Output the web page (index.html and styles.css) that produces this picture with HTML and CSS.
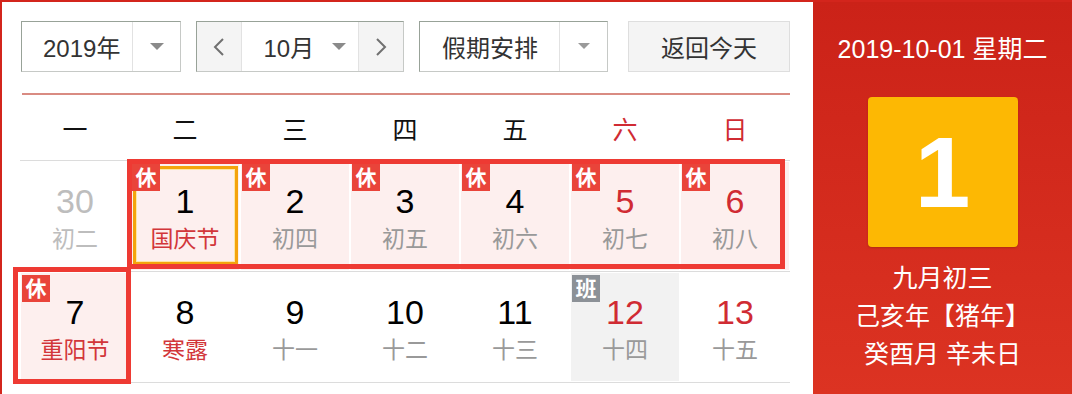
FILE: index.html
```html
<!DOCTYPE html>
<html lang="zh-CN">
<head>
    <meta charset="UTF-8">
    <meta name="viewport" content="width=device-width, initial-scale=1.0">
    <title>万年历</title>
    <link rel="stylesheet" href="styles.css">
</head>
<body>
    <div class="calendar">
        <div class="main">
            <div class="toolbar">
                <div class="select year-select">
                    <span class="select-text">2019年</span>
                    <span class="select-arrow">
                        <svg width="14" height="8" viewBox="0 0 14 8"><polygon points="0,0 14,0 7,7" fill="#8a8a8a"/></svg>
                    </span>
                </div>

                <div class="month-group">
                    <button class="nav-btn">
                        <svg width="14" height="20" viewBox="0 0 14 20"><polyline points="11,2 3,10 11,18" fill="none" stroke="#707070" stroke-width="2"/></svg>
                    </button>
                    <div class="month-select">
                        <span>10月</span>
                        <svg width="14" height="8" viewBox="0 0 14 8"><polygon points="0,0 14,0 7,7" fill="#8a8a8a"/></svg>
                    </div>
                    <button class="nav-btn">
                        <svg width="14" height="20" viewBox="0 0 14 20"><polyline points="3,2 11,10 3,18" fill="none" stroke="#707070" stroke-width="2"/></svg>
                    </button>
                </div>

                <div class="select holiday-select">
                    <span class="select-text">假期安排</span>
                    <span class="select-arrow">
                        <svg width="12" height="7" viewBox="0 0 12 7"><polygon points="0,0 12,0 6,6" fill="#9a9a9a"/></svg>
                    </span>
                </div>

                <button class="today-btn">返回今天</button>
            </div>

            <div class="divider"></div>

            <div class="week-head">
                <div>一</div>
                <div>二</div>
                <div>三</div>
                <div>四</div>
                <div>五</div>
                <div class="weekend">六</div>
                <div class="weekend">日</div>
            </div>

            <div class="week-row">
                <div class="day other">
                    <span class="num">30</span>
                    <span class="lunar">初二</span>
                </div>
                <div class="range range-top">
                    <div class="day holiday selected">
                        <span class="badge">休</span>
                        <span class="num">1</span>
                        <span class="lunar festival">国庆节</span>
                    </div>
                    <div class="day holiday">
                        <span class="badge">休</span>
                        <span class="num">2</span>
                        <span class="lunar">初四</span>
                    </div>
                    <div class="day holiday">
                        <span class="badge">休</span>
                        <span class="num">3</span>
                        <span class="lunar">初五</span>
                    </div>
                    <div class="day holiday">
                        <span class="badge">休</span>
                        <span class="num">4</span>
                        <span class="lunar">初六</span>
                    </div>
                    <div class="day holiday weekend">
                        <span class="badge">休</span>
                        <span class="num">5</span>
                        <span class="lunar">初七</span>
                    </div>
                    <div class="day holiday weekend">
                        <span class="badge">休</span>
                        <span class="num">6</span>
                        <span class="lunar">初八</span>
                    </div>
                </div>
            </div>

            <div class="week-row">
                <div class="range range-bottom">
                    <div class="day holiday">
                        <span class="badge">休</span>
                        <span class="num">7</span>
                        <span class="lunar festival">重阳节</span>
                    </div>
                </div>
                <div class="day">
                    <span class="num">8</span>
                    <span class="lunar festival">寒露</span>
                </div>
                <div class="day">
                    <span class="num">9</span>
                    <span class="lunar">十一</span>
                </div>
                <div class="day">
                    <span class="num">10</span>
                    <span class="lunar">十二</span>
                </div>
                <div class="day">
                    <span class="num">11</span>
                    <span class="lunar">十三</span>
                </div>
                <div class="day workday weekend">
                    <span class="badge work">班</span>
                    <span class="num">12</span>
                    <span class="lunar">十四</span>
                </div>
                <div class="day weekend">
                    <span class="num">13</span>
                    <span class="lunar">十五</span>
                </div>
            </div>
        </div>

        <div class="side">
            <div class="side-date">2019-10-01 星期二</div>
            <div class="side-day">1</div>
            <div class="side-lunar">
                <div>九月初三</div>
                <div>己亥年【猪年】</div>
                <div>癸酉月 辛未日</div>
            </div>
        </div>
    </div>
</body>
</html>
```

FILE: styles.css
```css
* {
    margin: 0;
    padding: 0;
    box-sizing: border-box;
    font-family: 'Liberation Sans', 'Noto Sans CJK SC', sans-serif;
}

:root {
    --red: #d3251c;
    --text-color: #333;
    --line-color: #dcdcdc;
    --holiday-bg: #fdefee;
    --badge-red: #e9443a;
    --weekend-color: #d02b33;
}

body {
    background: #fff;
    overflow: hidden;
}

.calendar {
    display: flex;
    height: 394px;
    overflow: hidden;
    border-top: 2px solid var(--red);
    border-left: 2px solid var(--red);
}

.main {
    width: 811px;
    padding: 19px 23px 0 18px;
    background: #fff;
}

/* toolbar */
.toolbar {
    display: flex;
    height: 51px;
    margin-left: 1px;
    color: var(--text-color);
    font-size: 24px;
}

.select {
    display: flex;
    height: 51px;
    border: 1px solid #c6c9c6;
    border-top-color: #98a298;
    border-left-color: #98a298;
    background: #fff;
}

.select-text {
    flex: 1;
    display: flex;
    align-items: center;
    padding-left: 21px;
}

.select-arrow {
    width: 48px;
    display: flex;
    align-items: center;
    justify-content: center;
    border-left: 1px solid #e2e2e2;
}

.year-select {
    width: 160px;
}

.month-group {
    display: flex;
    width: 208px;
    height: 51px;
    margin-left: 15px;
    border: 1px solid #c6c9c6;
    border-top-color: #98a298;
    border-left-color: #98a298;
}

.nav-btn {
    width: 44px;
    border: none;
    background: #f4f4f4;
    display: flex;
    align-items: center;
    justify-content: center;
}

.month-select {
    width: 120px;
    display: flex;
    align-items: center;
    gap: 18px;
    padding-left: 22px;
    background: #fff;
    border-left: 1px solid #e2e2e2;
    border-right: 1px solid #e2e2e2;
}

.holiday-select {
    width: 189px;
    margin-left: 15px;
}

.holiday-select .select-text {
    padding-left: 22px;
}

.today-btn {
    width: 162px;
    height: 51px;
    margin-left: 20px;
    border: 1px solid #dedede;
    background: #f4f4f4;
    color: var(--text-color);
    font-size: 24px;
}

.divider {
    height: 2px;
    margin: 21px 0 0 2px;
    background: #d98b82;
}

/* week header */
.week-head {
    display: flex;
    height: 66px;
    border-bottom: 1px solid var(--line-color);
    font-size: 25px;
    color: #111;
}

.week-head div {
    width: 110px;
    display: flex;
    align-items: center;
    justify-content: center;
}

.week-head .weekend {
    color: var(--weekend-color);
}

/* day grid */
.week-row {
    display: flex;
    border-bottom: 1px solid var(--line-color);
}

.range {
    display: flex;
    position: relative;
}

.range::after {
    content: '';
    position: absolute;
    border: 5px solid #ee3a33;
    pointer-events: none;
    z-index: 1;
}

.range-top::after {
    top: -2px;
    right: 5px;
    bottom: 2px;
    left: -3px;
}

.range-bottom::after {
    top: -5px;
    right: -1px;
    bottom: -2px;
    left: -7px;
}

.day {
    position: relative;
    width: 110px;
    height: 110px;
    padding-top: 20px;
    text-align: center;
}

.num {
    display: block;
    font-size: 34px;
    line-height: 40px;
    color: #000;
}

.lunar {
    display: block;
    font-size: 23px;
    line-height: 36px;
    color: #999;
}

.day.other .num,
.day.other .lunar {
    color: #bdbdbd;
}

.day.weekend .num {
    color: var(--weekend-color);
}

.lunar.festival {
    color: #d2363a;
}

.holiday {
    background: var(--holiday-bg);
    border: 1px solid #fff;
    padding-top: 19px;
}

.workday {
    background: #f2f2f2;
    border: 1px solid #fff;
    padding-top: 19px;
}

.selected::before {
    content: '';
    position: absolute;
    top: 4px;
    left: 2px;
    right: 1px;
    bottom: 5px;
    border: 3px solid #f4a30c;
    box-shadow: inset 0 0 0 1px #fde7a4;
}

.badge {
    position: absolute;
    top: 2px;
    left: 1px;
    width: 28px;
    height: 27px;
    background: var(--badge-red);
    color: #fff;
    font-size: 21px;
    font-weight: 700;
    line-height: 27px;
    text-align: center;
    z-index: 2;
}

.badge.work {
    background: #8c9197;
}

/* side panel */
.side {
    flex: 1;
    background: linear-gradient(180deg, #cb2218 0%, #dc3322 100%);
    color: #fff;
    text-align: center;
}

.side-date {
    margin-top: 32px;
    font-size: 25px;
    line-height: 30px;
}

.side-day {
    width: 150px;
    height: 150px;
    margin: 33px auto 0;
    display: flex;
    align-items: center;
    justify-content: center;
    background: #fdb803;
    border-radius: 4px;
    box-shadow: 0 1px 2px rgba(120, 40, 0, 0.4);
    font-size: 100px;
    font-weight: 700;
}

.side-lunar {
    margin-top: 12px;
    font-size: 25px;
    line-height: 38px;
}
```
